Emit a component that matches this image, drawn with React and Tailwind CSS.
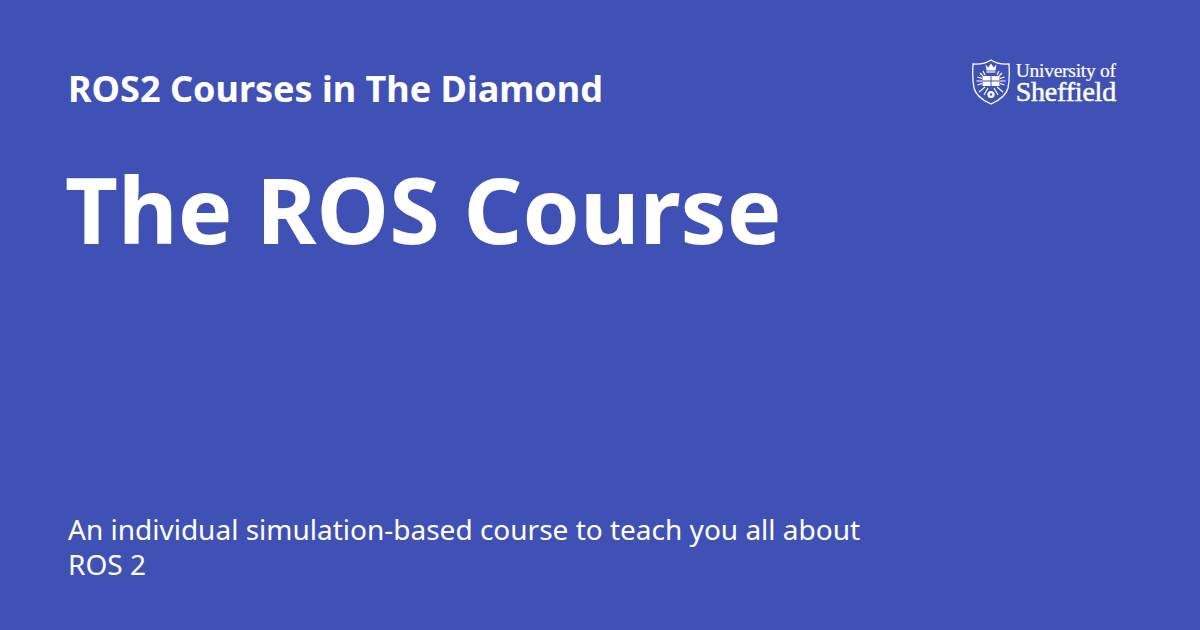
function Logo() {
  return (
    <div className="flex items-center gap-[6px]">
      <svg width="38" height="46" viewBox="0 0 38 46" fill="none" stroke="white">
        {/* shield */}
        <path d="M1 5 C8 5.5 14 4.5 19 1 C24 4.500 30 5.500 37 5 C37.500 13 37.500 22 36 29 C34 37 27 41.500 19 45 C11 41.500 4 37 2 29 C0.500 22 0.500 13 1 5 Z" strokeWidth="1.3" />
        {/* crown */}
        <path d="M13.500 5.500 L16.300 8.500 L19 4.500 L21.700 8.500 L24.500 5.500 L23.500 11.500 H14.500 Z" fill="white" stroke="none" />
        <path d="M14.500 13 H23.500" strokeWidth="1.200" />
        {/* rays */}
        <path d="M11 12 L13 16 M8 14 L11 17 M5.500 18 L10 19.500 M4.500 22 H10 M5.500 26 L10 24.500 M27 12 L25 16 M30 14 L27 17 M32.500 18 L28 19.500 M33.500 22 H28 M32.500 26 L28 24.500" strokeWidth="1.200" />
        {/* book */}
        <path d="M10.500 17 H27.500 V27 H10.500 Z" fill="white" stroke="none" />
        <path d="M19 17 V27 M10.500 22 H27.500" stroke="#4051b5" strokeWidth="1" />
        {/* crossed lines below the book */}
        <path d="M7 33 L13 28 M31 33 L25 28 M12 36 L16 29 M26 36 L22 29" strokeWidth="1.100" />
        {/* rose */}
        <circle cx="19" cy="35.500" r="3.600" fill="white" stroke="none" />
        <circle cx="19" cy="35.500" r="1.200" fill="#4051b5" stroke="none" />
      </svg>
      <div className="flex flex-col pt-[2px] font-['Liberation_Serif',serif] text-white">
        <span className="text-[19.5px] leading-[18px] tracking-[-0.25px] [-webkit-text-stroke:0.2px_white]">University of</span>
        <span className="text-[28px] leading-[24px] tracking-[-0.2px] [-webkit-text-stroke:0.5px_white]">Sheffield</span>
      </div>
    </div>
  )
}

export default function App() {
  return (
    <div className="w-[1200px] h-[630px] overflow-hidden bg-[#4051b5] text-white font-['Noto_Sans',sans-serif] flex flex-col pl-[68px] pr-[84px]">
      <div className="flex justify-between items-start pt-[59px]">
        <h2 className="text-[36px] leading-[60px] font-bold">ROS2 Courses in The Diamond</h2>
        <Logo />
      </div>
      <h1 className="text-[91.800px] leading-[120px] font-bold -ml-[3px] mt-[30px]">The ROS Course</h1>
      <p className="mt-auto mb-[48px] w-[800px] text-[28px] leading-[35px]">
        An individual simulation-based course to teach you all about ROS 2
      </p>
    </div>
  )
}
